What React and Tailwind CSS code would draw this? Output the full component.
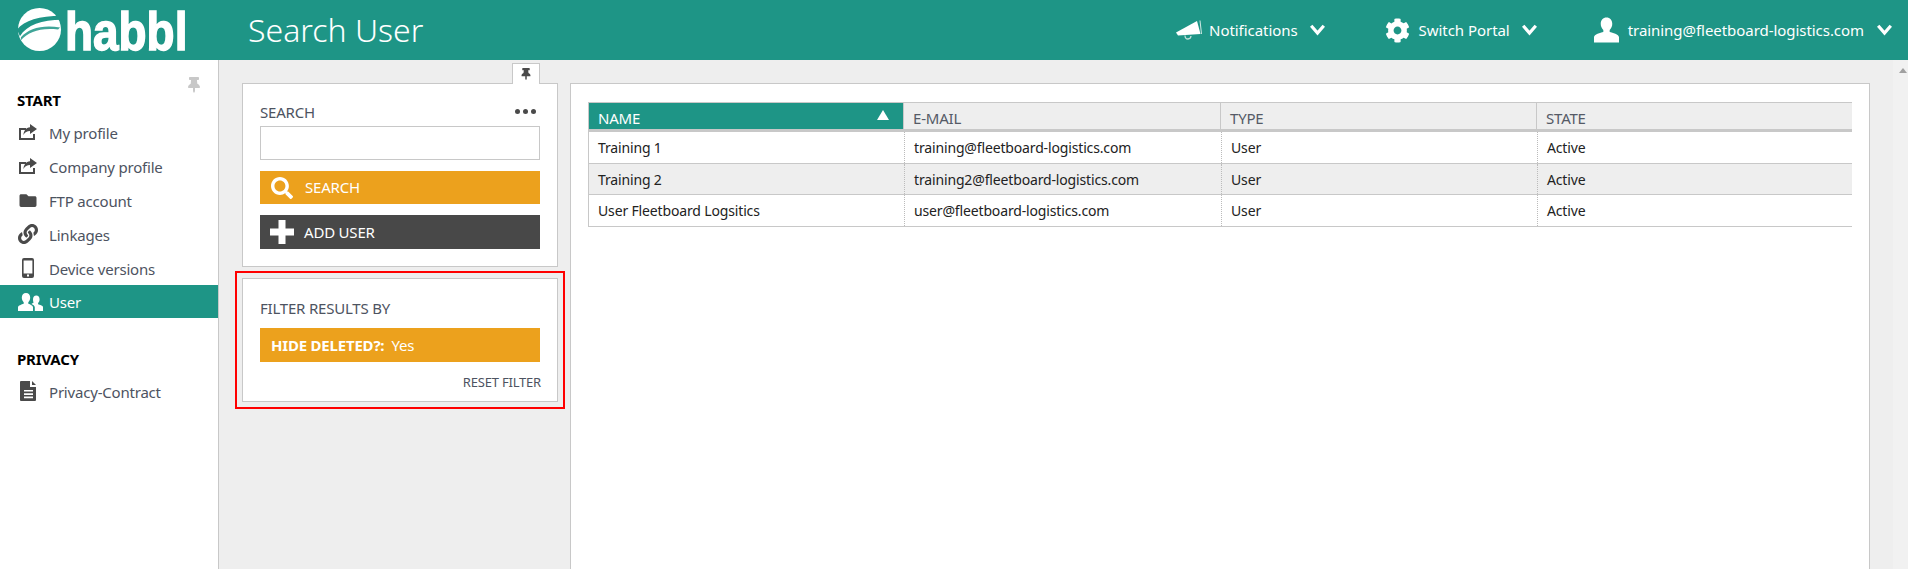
import React from "react";
import { FaFolder, FaLink, FaSearch, FaCog, FaThumbtack } from "react-icons/fa";

const ShareIcon = () => (
  <svg viewBox="0 0 20 16" className="w-5 h-4 text-[#4a4a4a]" fill="currentColor">
    <path d="M1 4h7v2H3v8h12v-4h2v6H1z" />
    <path d="M12 0l7 5-7 5V7C9 7 7 8 5.500 11 5.500 7 8 3.500 12 3.200z" />
  </svg>
);
const Phone = () => (
  <svg viewBox="0 0 12 20" className="w-3 h-5" fill="#4a4a4a">
    <path fillRule="evenodd" d="M2 0h8a2 2 0 0 1 2 2v16a2 2 0 0 1-2 2H2a2 2 0 0 1-2-2V2a2 2 0 0 1 2-2zm-.4 2.400v13h8.800v-13zM5 16.600v1.800h2v-1.800z" />
  </svg>
);
const Users = () => (
  <svg viewBox="0 0 25 20" className="w-[25px] h-5" fill="#fff">
    <path d="M8 1c2.600 0 4.200 2 4.200 4.600 0 2-.8 3.600-1.900 4.700v1.500c2 .7 4.700 1.800 4.700 3.500V19H0v-3.700c0-1.700 3.700-2.800 5.700-3.500v-1.500C4.600 9.200 3.800 7.600 3.800 5.600 3.800 3 5.400 1 8 1z" />
    <path d="M18.300 3.500c2 0 3.300 1.600 3.300 3.700 0 1.600-.6 2.900-1.500 3.800v1.200c1.600.6 4.900 1.300 4.900 2.800V19h-8.200v-3.700c0-1.300-1.200-2.500-3.400-3.400.5-.4 1.300-.7 2-.9C15.500 10.100 15 8.800 15 7.200c0-2.100 1.300-3.700 3.300-3.700z" />
  </svg>
);
const Doc = () => (
  <svg viewBox="0 0 17 20" className="w-[17px] h-5" fill="#4a4a4a">
    <path fillRule="evenodd" d="M1 0h9v6h6v13a1 1 0 0 1-1 1H1a1 1 0 0 1-1-1V1a1 1 0 0 1 1-1zm11 0l4 4h-4zM4 9v1.600h9V9zm0 3.300v1.600h9v-1.600zm0 3.300v1.600h9v-1.600z" />
  </svg>
);
const Megaphone = () => (
  <svg viewBox="0 0 26 20" className="w-[26px] h-5" fill="#fff">
    <path d="M0 12.500L21 1l3.500 13L2 15.500z" />
    <path d="M24 .5l1.500 13.500" stroke="#cfe8e3" strokeWidth="1" />
    <path d="M9 15.500c0 2.500 1.500 3.500 3 3.500s2.800-1 3-3" fill="none" stroke="#bfe0da" strokeWidth="1.300" />
  </svg>
);
const UserIcon = () => (
  <svg viewBox="0 0 26 26" className="w-[25px] h-[26px]" fill="#fff">
    <path d="M13 0c3.600 0 6 2.800 6 6.600 0 2.800-1.200 5-2.700 6.400v2c3 1 9.700 2 9.700 5.500V26H0v-5.500c0-3.500 6.700-4.500 9.700-5.500v-2C8.200 11.600 7 9.400 7 6.600 7 2.800 9.400 0 13 0z" />
  </svg>
);
const Plus = () => (
  <svg viewBox="0 0 24 24" className="w-6 h-6" fill="#fff">
    <path d="M8.500 0h7v8.500H24v7h-8.500V24h-7v-8.500H0v-7h8.500z" />
  </svg>
);
const Chevron = () => (
  <svg viewBox="0 0 15 12" className="w-[15px] h-3" fill="none" stroke="#fff" strokeWidth="3.200">
    <path d="M1.200 1.800L7.500 9l6.300-7.200" />
  </svg>
);
const Logo = () => (
  <div className="flex items-center h-[60px] w-[248px] shrink-0 pl-[17px]">
    <svg viewBox="0 0 46 46" className="w-[45px] h-[45px] shrink-0 mt-[-2px]">
      <circle cx="23" cy="23" r="22" fill="#fff" />
      <path d="M0 23C8 14 22 9 46 9l1 4C26 13 10 18 3 30z" fill="#1e9586" />
      <path d="M4 34C12 25 24 21 42 23l2-2C26 18 12 22 4 31z" fill="#1e9586" opacity="0.85" />
    </svg>
    <span className="self-start text-white font-bold text-[54px] h-[60px] leading-[62px] tracking-[0px] origin-left scale-x-[0.85] ml-[3px] [-webkit-text-stroke:1.5px_white] font-['Liberation_Sans',sans-serif]">habbl</span>
  </div>
);

function NavRow({ icon, label, active }) {
  return (
    <div className={`flex items-center ${active ? "bg-[#1e9586] text-white h-[33px]" : "text-[#4d5361] h-[34px]"}`}>
      <div className="w-[49px] pl-[18px] flex items-center shrink-0">{icon}</div>
      <span className={active ? "pt-[1px]" : "pt-[3px]"}>{label}</span>
    </div>
  );
}

const Hd = ({ children, active, w }) => (
  <div className={`${w} flex items-center justify-between px-[9px] pt-[5px] border-r border-[#c8c8c8] ${active ? "bg-[#1e9586] text-white" : "text-[#555a66]"}`}>
    <span>{children}</span>
    {active && <span className="w-0 h-0 border-x-[6px] border-x-transparent border-b-[10px] border-b-white mr-[5px] mb-[7px]" />}
  </div>
);

function Row({ cells, alt, h }) {
  const ws = ["w-[316px]", "w-[317px]", "w-[316px]", "flex-1"];
  return (
    <div className={`flex ${h} border-b border-[#c8c8c8] text-[14px] tracking-[-0.15px] ${alt ? "bg-[#eeeeee]" : "bg-white"} text-[#222]`}>
      {cells.map((c, i) => (
        <div key={i} className={`${ws[i]} px-[9px] flex items-center ${i < 3 ? "border-r border-dotted border-[#bbb]" : ""}`}>{c}</div>
      ))}
    </div>
  );
}

export default function App() {
  return (
    <div className="h-[569px] w-[1908px] overflow-hidden flex flex-col bg-[#eeeeee] font-['Noto_Sans',sans-serif] text-[15px] tracking-[-0.2px]">
      <header className="h-[60px] bg-[#1e9586] flex items-center shrink-0 text-white">
        <Logo />
        <h1 className="text-[32px] font-light tracking-[0px]">Search User</h1>
        <div className="ml-auto flex items-center pr-[16px] tracking-[-0.05px]">
          <div className="flex items-center"><Megaphone /><span className="ml-[7px] mr-[12px]">Notifications</span><Chevron /></div>
          <div className="flex items-center ml-[60px]"><FaCog className="w-[25px] h-[25px]" /><span className="ml-[9px] mr-[12px]">Switch Portal</span><Chevron /></div>
          <div className="flex items-center ml-[57px]"><UserIcon /><span className="ml-[9px] mr-[13px]">training@fleetboard-logistics.com</span><Chevron /></div>
        </div>
      </header>
      <div className="flex flex-1 min-h-0">
        <aside className="w-[219px] shrink-0 bg-white border-r border-[#c8c8c8] relative pt-[31px]">
          <FaThumbtack className="absolute right-[17px] top-[17px] w-[14px] h-[16px] text-[#c8c8c8]" />
          <div className="font-bold text-black pl-[17px] h-[19px] leading-[19px] mb-[5px]">START</div>
          <NavRow icon={<ShareIcon />} label="My profile" />
          <NavRow icon={<ShareIcon />} label="Company profile" />
          <NavRow icon={<FaFolder className="w-5 h-[17px] text-[#4a4a4a]" />} label="FTP account" />
          <NavRow icon={<FaLink className="w-5 h-5 text-[#4a4a4a]" />} label="Linkages" />
          <NavRow icon={<div className="pl-[4px]"><Phone /></div>} label="Device versions" />
          <NavRow active icon={<Users />} label="User" />
          <div className="font-bold text-black pl-[17px] h-[19px] leading-[19px] mt-[32px] mb-[5px]">PRIVACY</div>
          <NavRow icon={<div className="pl-[2px]"><Doc /></div>} label="Privacy-Contract" />
        </aside>
        <main className="flex-1 flex min-w-0 pl-[23px] pt-[23px] gap-[12px]">
          <div className="w-[316px] shrink-0 flex flex-col gap-[11px]">
            <section className="relative h-[184px] bg-white border border-[#c8c8c8] px-[17px] pt-[15px] text-[#4d5361]">
              <div className="absolute right-[17px] -top-[21px] w-[28px] h-[21px] bg-white border border-b-0 border-[#c8c8c8] flex items-center justify-center">
                <FaThumbtack className="w-[10px] h-[12px] text-[#4a4a4a]" />
              </div>
              <div className="flex items-center justify-between h-[27px]">
                <span>SEARCH</span>
                <span className="flex gap-[3px] pr-[4px] pb-[2px]">
                  <i className="block w-[5px] h-[5px] rounded-full bg-[#4a4a4a]" />
                  <i className="block w-[5px] h-[5px] rounded-full bg-[#4a4a4a]" />
                  <i className="block w-[5px] h-[5px] rounded-full bg-[#4a4a4a]" />
                </span>
              </div>
              <div className="h-[34px] border border-[#c8c8c8] mb-[11px]" />
              <div className="h-[33px] bg-[#eca11d] text-white flex items-center pl-[11px] mb-[11px]"><FaSearch className="w-[22px] h-[22px] mr-[12px]" />SEARCH</div>
              <div className="h-[34px] bg-[#484848] text-white flex items-center pl-[10px]"><Plus /><span className="ml-[10px]">ADD USER</span></div>
            </section>
            <section className="h-[124px] bg-white border border-[#c8c8c8] px-[17px] pt-[19px] text-[#4d5361] relative outline-2 outline-[#ff0000] outline-offset-[5px]">
              <div className="h-[20px] leading-[20px] mb-[10px]">FILTER RESULTS BY</div>
              <div className="h-[34px] bg-[#eca11d] text-white flex items-center pl-[11px]"><b className="font-bold mr-[7px]">HIDE DELETED?:</b>Yes</div>
              <div className="text-right text-[13px] mt-[11px] h-[18px] leading-[18px] -mr-[1px]">RESET FILTER</div>
            </section>
          </div>
          <section className="w-[1300px] shrink-0 h-[520px] bg-white border border-[#c8c8c8] px-[17px] pt-[18px]">
            <div className="w-[1264px]">
              <div className="flex h-[30px] bg-[#eeeeee] border-t border-b-[3px] border-l border-[#c8c8c8]">
                <Hd active w="w-[315px]">NAME</Hd>
                <Hd w="w-[317px]">E-MAIL</Hd>
                <Hd w="w-[316px]">TYPE</Hd>
                <div className="flex-1 flex items-center px-[9px] pt-[5px] text-[#555a66]">STATE</div>
              </div>
              <div className="border-l border-[#c8c8c8]">
                <Row h="h-[32px]" cells={["Training 1", "training@fleetboard-logistics.com", "User", "Active"]} />
                <Row h="h-[31px]" alt cells={["Training 2", "training2@fleetboard-logistics.com", "User", "Active"]} />
                <Row h="h-[32px]" cells={["User Fleetboard Logsitics", "user@fleetboard-logistics.com", "User", "Active"]} />
              </div>
            </div>
          </section>
          <div className="ml-auto w-[15px] shrink-0 -mt-[23px] bg-[#f1f1f1] flex justify-center pt-[8px]">
            <span className="w-0 h-0 border-x-[4px] border-x-transparent border-b-[5px] border-b-[#a0a0a0] ml-[5px]" />
          </div>
        </main>
      </div>
    </div>
  );
}
